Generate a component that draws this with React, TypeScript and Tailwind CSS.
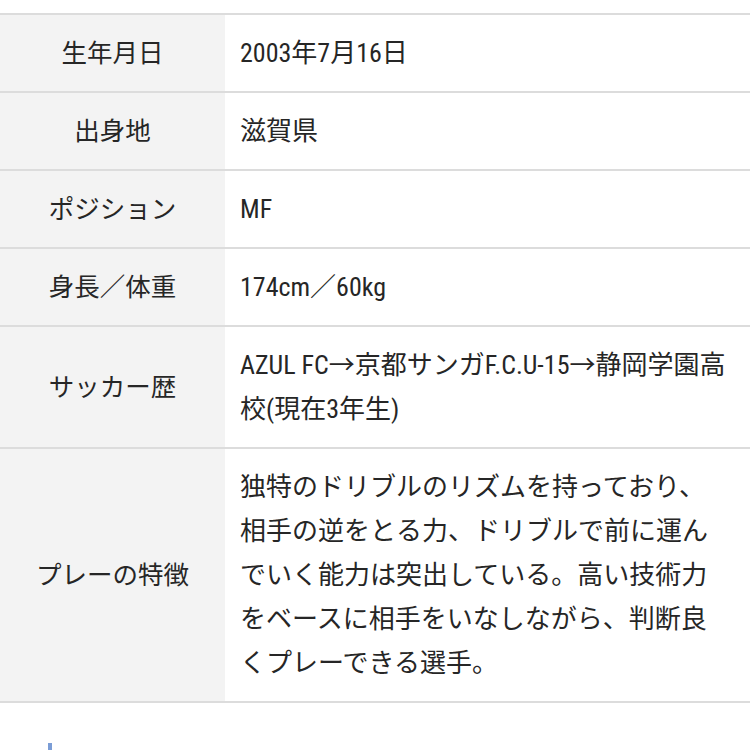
const Arrow = () => <span className="font-['Noto_Sans_CJK_JP'] leading-none">→</span>;

const rows: { label: string; value: React.ReactNode }[] = [
  { label: "生年月日", value: "2003年7月16日" },
  { label: "出身地", value: "滋賀県" },
  { label: "ポジション", value: "MF" },
  { label: "身長／体重", value: "174cm／60kg" },
  {
    label: "サッカー歴",
    value: (
      <>
        AZUL FC<Arrow />京都サンガF.C.U-15<Arrow />静岡学園高校(現在3年生)
      </>
    ),
  },
  {
    label: "プレーの特徴",
    value: (
      <div className="max-w-[478px]">
        独特のドリブルのリズムを持っており、相手の逆をとる力、ドリブルで前に運んでいく能力は突出している。高い技術力をベースに相手をいなしながら、判断良くプレーできる選手。
      </div>
    ),
  },
];

export default function App() {
  return (
    <div className="min-h-[750px] bg-white pt-[13px] font-['Liberation_Sans_Narrow','Roboto_Condensed','Noto_Sans_CJK_JP',sans-serif] text-[#262626]">
      <table className="w-full border-collapse border-t-2 border-[#dcdcdc]">
        <tbody>
          {rows.map((r) => (
            <tr key={r.label} className="border-b-2 border-[#dcdcdc]">
              <th className="w-[225px] bg-[#f3f3f3] px-2 text-center text-[25.5px] font-normal leading-[44px]">
                {r.label}
              </th>
              <td className="py-4 pl-[15px] pr-[18px] text-left text-[26px] leading-[44px]">
                {r.value}
              </td>
            </tr>
          ))}
        </tbody>
      </table>
      <div className="ml-12 mt-10 h-8 border-l-4 border-[#7b9dd6]" />
    </div>
  );
}
